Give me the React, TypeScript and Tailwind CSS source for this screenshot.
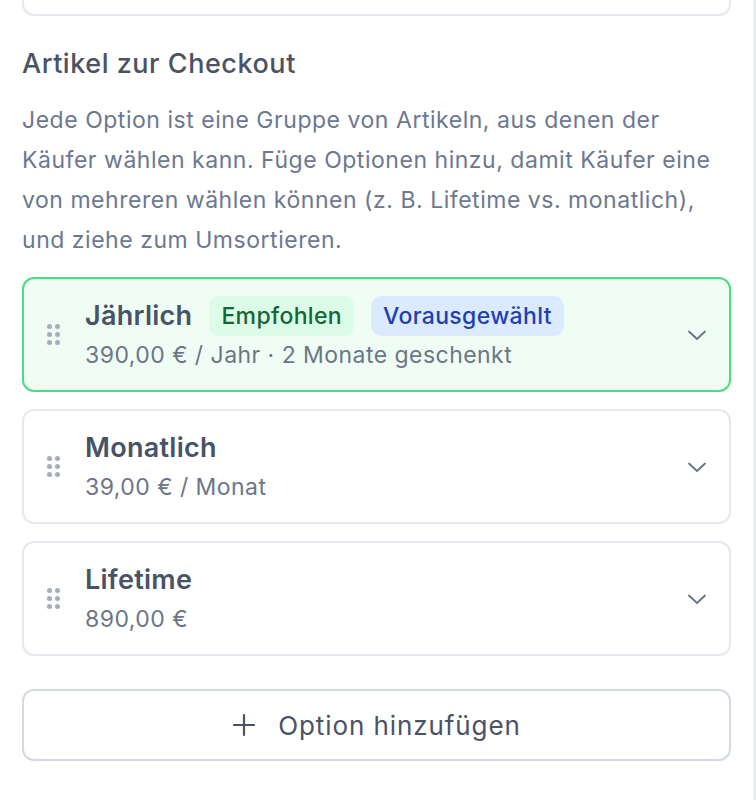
import React from "react";

function Grip() {
  return (
    <div className="grid grid-cols-2 gap-x-[3px] gap-y-[3px] w-[13px] shrink-0">
      {[0, 1, 2, 3, 4, 5].map((i) => (
        <span key={i} className="block w-[5px] h-[5px] rounded-full bg-[#a3adbd]" />
      ))}
    </div>
  );
}

function Chevron() {
  return (
    <svg width="24" height="24" viewBox="0 0 24 24" fill="none" stroke="#64748b" strokeWidth="1.8" strokeLinecap="round" strokeLinejoin="round" className="shrink-0">
      <path d="M4 8.5l8 7.5 8-7.5" />
    </svg>
  );
}

type Opt = { title: string; sub: string; active?: boolean; badges?: boolean };

function OptionCard({ title, sub, active, badges }: Opt) {
  return (
    <div
      className={
        active
          ? "flex items-center rounded-[12px] border-2 border-[#4ade80] bg-[#f0fdf4] h-[115px] pl-[23px] pr-[20px]"
          : "flex items-center rounded-[12px] border-2 border-[#e5e8ee] bg-white h-[115px] pl-[23px] pr-[20px]"
      }
    >
      <Grip />
      <div className="flex-1 flex flex-col ml-[25px] -mt-[1px]">
        <div className="flex items-center h-[40px]">
          <span className="text-[27px] tracking-[0.01em] font-semibold text-[#475366] leading-[40px]">{title}</span>
          {badges && (
            <>
              <span className="ml-[17px] h-[40px] flex items-center px-[12px] rounded-[10px] bg-[#dcfce7] text-[#166534] text-[23px] tracking-[0.015em] font-medium">
                Empfohlen
              </span>
              <span className="ml-[17px] h-[40px] flex items-center px-[12px] rounded-[10px] bg-[#dbeafe] text-[#1e40af] text-[23px] tracking-[0.015em] font-medium">
                Vorausgewählt
              </span>
            </>
          )}
        </div>
        <div className="text-[23px] tracking-[0.02em] leading-[34px] mt-[2px] text-[#6b7687]">{sub}</div>
      </div>
      <Chevron />
    </div>
  );
}

export default function App() {
  return (
    <div className="min-h-[800px] w-full bg-white flex" style={{ fontFamily: "Inter, 'Noto Sans', sans-serif" }}>
      <div className="flex-1 px-[22px]">
        <div className="h-[16px] border-2 border-t-0 border-[#e5e8ee] rounded-b-[12px]" />
        <h2 className="mt-[32px] text-[27px] tracking-[0.02em] leading-[32px] font-medium text-[#4b5263]">Artikel zur Checkout</h2>
        <p className="mt-[20px] text-[23px] tracking-[0.023em] leading-[40px] text-[#6b7890]">
          Jede Option ist eine Gruppe von Artikeln, aus denen der Käufer wählen kann. Füge Optionen hinzu, damit Käufer eine von mehreren wählen können (z. B. Lifetime vs. monatlich), und ziehe zum Umsortieren.
        </p>
        <div className="mt-[17px] flex flex-col gap-[17px]">
          <OptionCard title="Jährlich" sub="390,00 € / Jahr · 2 Monate geschenkt" active badges />
          <OptionCard title="Monatlich" sub="39,00 € / Monat" />
          <OptionCard title="Lifetime" sub="890,00 €" />
        </div>
        <button className="mt-[33px] w-full h-[72px] rounded-[12px] border-2 border-[#d3dae4] bg-white flex items-center justify-center gap-[22px] text-[#4b5263]">
          <svg width="24" height="24" viewBox="0 0 24 24" fill="none" stroke="#4b5263" strokeWidth="2.2" strokeLinecap="round">
            <path d="M12 2v20M2 12h20" />
          </svg>
          <span className="text-[26px] tracking-[0.035em]">Option hinzufügen</span>
        </button>
      </div>
      <div className="w-[3px] bg-[#eceef2]" />
    </div>
  );
}
